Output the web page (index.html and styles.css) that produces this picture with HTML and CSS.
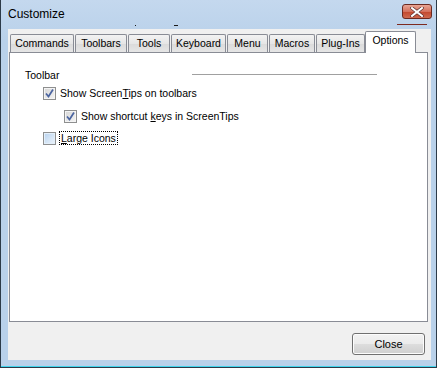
FILE: index.html
```html
<!DOCTYPE html>
<html lang="en">
<head>
    <meta charset="utf-8">
    <title>Customize</title>
    <link rel="stylesheet" href="styles.css">
</head>
<body>
    <div class="window">
        <div class="titlebar">
            <span class="title">Customize</span>
            <span class="speck dot"></span>
            <span class="speck dash"></span>
            <div class="close-x">
                <svg width="14" height="10" viewBox="0 0 14 10">
                    <path d="M2 1 L12 9 M12 1 L2 9" stroke="#5a3030" stroke-width="3.4" stroke-linecap="square"/>
                    <path d="M2 1 L12 9 M12 1 L2 9" stroke="#ffffff" stroke-width="2" stroke-linecap="square"/>
                </svg>
            </div>
            <span class="close-glow"></span>
        </div>

        <div class="client">
            <div class="tabs">
                <div class="tab t-commands">Commands</div>
                <div class="tab t-toolbars">Toolbars</div>
                <div class="tab t-tools">Tools</div>
                <div class="tab t-keyboard">Keyboard</div>
                <div class="tab t-menu">Menu</div>
                <div class="tab t-macros">Macros</div>
                <div class="tab t-plugins">Plug-Ins</div>
                <div class="tab active">Options</div>
            </div>

            <div class="panel">
                <div class="group-head">
                    <span>Toolbar</span>
                    <span class="rule"></span>
                </div>
                <label class="check checked first">
                    <span class="box"><svg width="11" height="11" viewBox="0 0 11 11"><path d="M2 5.5 L4.5 8.5 L9 1.5" fill="none" stroke="#4a64a0" stroke-width="1.7"/></svg></span>
                    <span>Show Screen<u>T</u>ips on toolbars</span>
                </label>
                <label class="check checked sub">
                    <span class="box"><svg width="11" height="11" viewBox="0 0 11 11"><path d="M2 5.5 L4.5 8.5 L9 1.5" fill="none" stroke="#4a64a0" stroke-width="1.7"/></svg></span>
                    <span>Show shortcut <u>k</u>eys in ScreenTips</span>
                </label>
                <label class="check">
                    <span class="box"></span>
                    <span class="focus"><u>L</u>arge Icons</span>
                </label>
            </div>

            <div class="footer">
                <button class="btn">Close</button>
            </div>
        </div>
    </div>
</body>
</html>
```

FILE: styles.css
```css
* {
    box-sizing: border-box;
    margin: 0;
    padding: 0;
}

body {
    width: 437px;
    height: 368px;
    overflow: hidden;
    font-family: "Liberation Sans", Arial, sans-serif;
    font-size: 10.5px;
    color: #000;
    background: #fff;
}

.window {
    width: 437px;
    height: 368px;
    display: flex;
    flex-direction: column;
    background: linear-gradient(#c4d8ee, #b9d1ea 40px);
    border-left: 1px solid #2c3a48;
    border-right: 1px solid #2c3a48;
    border-bottom: 1px solid #2c3a48;
    box-shadow: inset 0 -1px 0 #3fd4ec;
}

.titlebar {
    height: 29px;
    position: relative;
    padding: 7px 0 0 7px;
    flex-shrink: 0;
}

.title {
    font-size: 12px;
}

.speck {
    position: absolute;
    top: 25px;
    height: 1px;
    background: #1a1a1a;
}

.dot {
    left: 134px;
    width: 1px;
}

.dash {
    left: 173px;
    width: 4px;
}

.close-x {
    position: absolute;
    top: 4px;
    left: 401px;
    width: 30px;
    height: 15px;
    border: 1px solid #6b2a22;
    border-radius: 3px;
    background: linear-gradient(#e8a595, #d4715d 50%, #c2462c 51%, #cf6a50);
    display: flex;
    align-items: center;
    justify-content: center;
}

.close-glow {
    position: absolute;
    top: 24px;
    left: 396px;
    width: 30px;
    height: 1px;
    background: #7d2a20;
}

.client {
    flex: 1;
    margin: 0 5px 7px 7px;
    background: #f0f0f0;
    display: flex;
    flex-direction: column;
    padding: 2px 0 0 1px;
}

.tabs {
    display: flex;
    align-items: flex-end;
    height: 21px;
    padding-left: 1px;
    position: relative;
    z-index: 1;
}

.tab {
    height: 18px;
    margin-right: 1px;
    border: 1px solid #898c95;
    border-bottom: none;
    border-radius: 2px 2px 0 0;
    background: linear-gradient(#f3f3f3, #e6e6e6 50%, #dadada 51%, #e6e6e6);
    text-align: center;
    padding-top: 2px;
    font-size: 10.5px;
}

.t-commands { width: 64px; }
.t-toolbars { width: 52px; }
.t-tools { width: 42px; }
.t-keyboard { width: 55px; }
.t-menu { width: 41px; }
.t-macros { width: 46px; }
.t-plugins { width: 49px; }

.tab.active {
    width: 51px;
    height: 22px;
    margin-bottom: -1px;
    margin-left: -1px;
    background: #fff;
    padding-top: 2px;
}

.panel {
    height: 270px;
    margin-right: 3px;
    background: #fff;
    border: 1px solid #898c95;
    padding: 15px 0 0 15px;
    display: flex;
    flex-direction: column;
    gap: 8px;
}

.group-head {
    display: flex;
    align-items: center;
    height: 13px;
}

.rule {
    margin-left: 133px;
    width: 185px;
    height: 1px;
    background: #a0a0a0;
}

.check {
    display: flex;
    align-items: center;
    gap: 4px;
    margin-left: 18px;
    height: 14px;
}

.check.first {
    margin-top: -3px;
}

.check.sub {
    margin-left: 39px;
    margin-top: 1px;
}

.box {
    width: 13px;
    height: 13px;
    border: 1px solid #8e8f8f;
    background: linear-gradient(135deg, #d6d6d6, #f4f4f4);
    box-shadow: inset 0 0 0 1px #f4f4f4;
    display: flex;
    align-items: center;
    justify-content: center;
}

.check:not(.checked) .box {
    background: linear-gradient(135deg, #b7d2ee, #eef5fc);
    box-shadow: inset 0 0 0 1px #e3effa;
}

.focus {
    outline: 1px dotted #000;
    padding: 0 1px;
}

.footer {
    flex: 1;
    display: flex;
    justify-content: flex-end;
    align-items: flex-start;
    padding: 11px 6px 0 0;
}

.btn {
    width: 73px;
    height: 22px;
    font-family: "Liberation Sans", Arial, sans-serif;
    font-size: 11px;
    border: 1px solid #707070;
    border-radius: 3px;
    background: linear-gradient(#f2f2f2, #ebebeb 50%, #dddddd 51%, #cfcfcf);
    box-shadow: inset 0 0 0 1px #fcfcfc;
}
```
